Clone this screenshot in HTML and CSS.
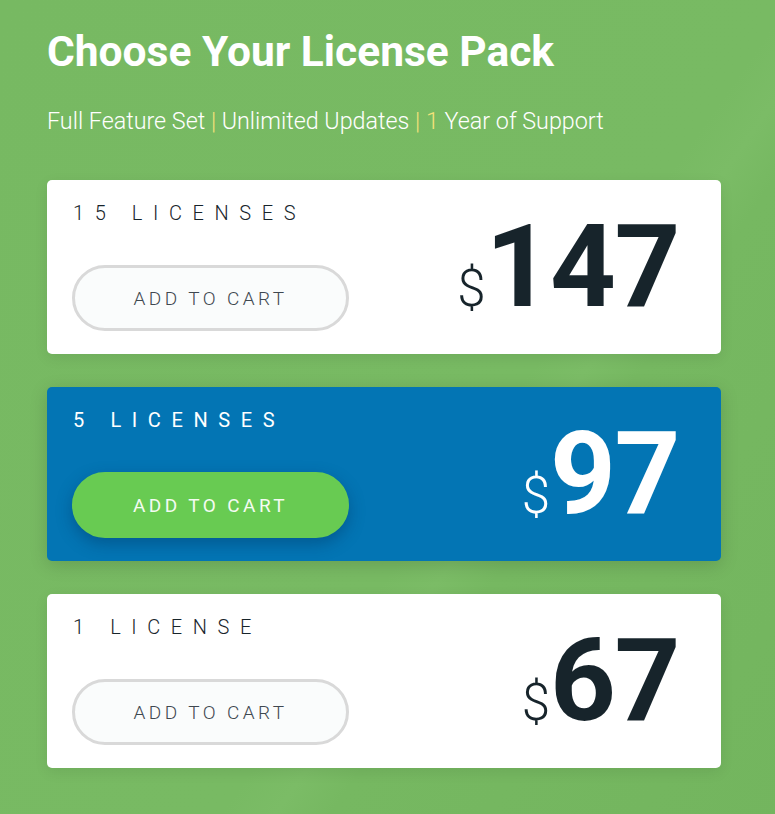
FILE: index.html
```html
<!DOCTYPE html>
<html lang="en">
  <head>
    <meta charset="UTF-8" />
    <title>Choose Your License Pack</title>
    <link rel="stylesheet" href="styles.css">
  </head>
  <body>
    <div class="pricing">
      <h1>Choose Your License Pack</h1>
      <p class="subtitle">
        Full Feature Set <span class="sep">|</span> Unlimited Updates
        <span class="sep">|</span> <span class="sep">1</span> Year of Support
      </p>

      <div class="plan">
        <div class="plan-info">
          <div class="plan-name">15 LICENSES</div>
          <button class="cart-btn">ADD TO CART</button>
        </div>
        <div class="price"><span class="currency">$</span>147</div>
      </div>

      <div class="plan featured">
        <div class="plan-info">
          <div class="plan-name">5 LICENSES</div>
          <button class="cart-btn">ADD TO CART</button>
        </div>
        <div class="price"><span class="currency">$</span>97</div>
      </div>

      <div class="plan">
        <div class="plan-info">
          <div class="plan-name">1 LICENSE</div>
          <button class="cart-btn">ADD TO CART</button>
        </div>
        <div class="price"><span class="currency">$</span>67</div>
      </div>
    </div>
  </body>
</html>
```

FILE: styles.css
```css
body {
  margin: 0;
  font-family: Roboto, "Liberation Sans", sans-serif;
  background: linear-gradient(125deg, #77b962 0%, #78ba63 58%, #7bbc66 62%, #76b861 66%, #73b55e 100%);
  min-height: 814px;
  color: #fff;
}

.pricing {
  padding: 24px 54px 40px 47px;
}

h1 {
  margin: 0;
  font-size: 42.5px;
  font-weight: 700;
  line-height: 56px;
}

.subtitle {
  margin: 26px 0 44px;
  font-size: 23.3px;
  font-weight: 300;
  line-height: 30px;
}

.subtitle .sep {
  color: #f3e27a;
}

.plan {
  display: flex;
  align-items: center;
  justify-content: space-between;
  background: #fff;
  border-radius: 5px;
  padding: 23px 42px 23px 25px;
  margin-bottom: 33px;
  box-shadow: 0 4px 14px rgba(0, 0, 0, 0.08);
  color: #17242b;
}

.plan-info {
  display: flex;
  flex-direction: column;
  align-items: flex-start;
}

.plan-name {
  margin-left: 1px;
  font-size: 20px;
  font-weight: 300;
  letter-spacing: 10.6px;
  line-height: 21px;
}

.cart-btn {
  margin-top: 41px;
  width: 277px;
  height: 66px;
  border: 3px solid #d9d9d9;
  border-radius: 33px;
  background: #fafcfc;
  font-family: Roboto, "Liberation Sans", sans-serif;
  font-size: 19px;
  font-weight: 300;
  letter-spacing: 3.4px;
  color: #3f4850;
  cursor: pointer;
}

.price {
  display: flex;
  align-items: baseline;
  font-size: 115px;
  font-weight: 700;
  line-height: 1;
  letter-spacing: -1.5px;
  margin-top: -2px;
}

.currency {
  font-size: 51px;
  font-weight: 300;
  letter-spacing: 0;
}

.featured {
  background: #0375b4;
  color: #fff;
  box-shadow: 0 4px 18px rgba(0, 0, 0, 0.15);
}

.featured .plan-name {
  font-weight: 400;
}

.featured .cart-btn {
  background: #68cb52;
  border-color: #68cb52;
  color: #f4fbf2;
  font-weight: 400;
  box-shadow: 0 6px 16px rgba(0, 40, 80, 0.35);
}
```
